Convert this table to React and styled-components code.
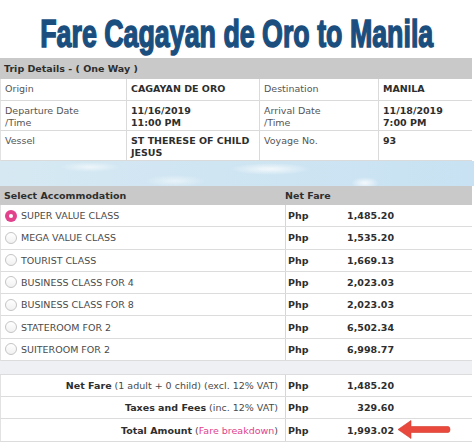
import React from 'react';
import styled, { createGlobalStyle } from 'styled-components';

const GlobalStyle = createGlobalStyle`
  html, body {
    margin: 0;
    padding: 0;
    background: #ffffff;
  }
  body {
    width: 474px;
    height: 442px;
    overflow: hidden;
    font-family: "DejaVu Sans", Verdana, sans-serif;
    font-size: 9.5px;
    color: #444;
  }
`;

const Page = styled.div`
  position: relative;
  width: 474px;
  height: 442px;
  display: flex;
  flex-direction: column;
`;

const TitleBar = styled.div`
  height: 58px;
  display: flex;
  justify-content: center;
  align-items: flex-start;
`;

const Title = styled.h1`
  margin: 0;
  margin-top: 15px;
  font-family: "Liberation Sans", Arial, sans-serif;
  font-weight: 700;
  font-size: 38px;
  line-height: 38px;
  color: #1a4e7e;
  -webkit-text-stroke: 1.5px #1a4e7e;
  transform: scaleX(0.705);
  transform-origin: center top;
  white-space: nowrap;
  flex: none;
`;

const Table = styled.div`
  width: 472px;
  display: flex;
  flex-direction: column;
`;

const HeaderBar = styled.div`
  height: ${p => p.$h}px;
  background: #c9c9c9;
  display: grid;
  grid-template-columns: ${p => p.$cols};
  align-items: center;
  font-weight: 700;
  color: #2e2e2e;
  padding-left: 4px;
  box-sizing: border-box;
`;

const TripRow = styled.div`
  display: grid;
  grid-template-columns: 126px 133px 119px 94px;
  height: ${p => p.$h}px;
  border-bottom: 1px solid #dadada;
  border-left: 1px solid #e2e2e2;
  box-sizing: border-box;
`;

const Cell = styled.div`
  padding: 4px 0 0 4px;
  line-height: 12px;
  border-right: 1px solid #dadada;
  color: ${p => (p.$bold ? '#2e2e2e' : '#555')};
  font-weight: ${p => (p.$bold ? 700 : 400)};
  white-space: nowrap;
  &:last-child {
    border-right: none;
  }
`;

const Sky = styled.div`
  height: 25px;
  width: 474px;
  background:
    radial-gradient(ellipse 40px 6px at 270px 8px, rgba(255,255,255,0.75), rgba(255,255,255,0) 100%),
    radial-gradient(ellipse 30px 5px at 90px 6px, rgba(255,255,255,0.6), rgba(255,255,255,0) 100%),
    radial-gradient(ellipse 14px 6px at 365px 22px, rgba(255,255,255,0.8), rgba(255,255,255,0) 100%),
    radial-gradient(ellipse 30px 6px at 175px 20px, rgba(255,255,255,0.5), rgba(255,255,255,0) 100%),
    linear-gradient(90deg, #d6e9f3 0%, #cfe5f2 45%, #c8e2f3 100%);
`;

const AccRow = styled.div`
  display: grid;
  grid-template-columns: 285px 1fr;
  height: ${p => p.$h}px;
  border-bottom: 1px solid #dcdcdc;
  border-left: 1px solid #e2e2e2;
  box-sizing: border-box;
`;

const NameCell = styled.div`
  display: flex;
  align-items: center;
  gap: 4px;
  padding-left: 4px;
  border-right: 1px solid #d6d6d6;
  color: #4a4a4a;
  justify-content: ${p => (p.$right ? 'flex-end' : 'flex-start')};
  padding-right: ${p => (p.$right ? '7px' : '0')};
  white-space: nowrap;
`;

const PriceCell = styled.div`
  display: grid;
  grid-template-columns: 40px 66px;
  align-items: center;
  padding-left: 2px;
  font-weight: 700;
  color: #2e2e2e;
`;

const Amount = styled.span`
  text-align: right;
`;

const Radio = styled.span`
  width: 12px;
  height: 12px;
  border-radius: 50%;
  box-sizing: border-box;
  flex: none;
  background: ${p => (p.$on ? '#e2418c' : 'linear-gradient(#ffffff, #f1f1f1)')};
  border: ${p => (p.$on ? 'none' : '1px solid #c4c4c4')};
  display: flex;
  align-items: center;
  justify-content: center;
  &::after {
    content: '';
    width: 4px;
    height: 4px;
    border-radius: 50%;
    background: #ffffff;
    display: ${p => (p.$on ? 'block' : 'none')};
  }
`;

const Gap = styled.div`
  height: 14px;
  width: 472px;
  background: #eef0f3;
  border-bottom: 1px solid #dcdcdc;
  box-sizing: border-box;
`;

const Strong = styled.b`
  color: #2e2e2e;
  font-weight: 700;
`;

const Link = styled.span`
  color: #e2418c;
`;

const Arrow = styled.svg`
  position: absolute;
  left: 396px;
  top: 418px;
`;

const accommodations = [
  { name: 'SUPER VALUE CLASS', fare: '1,485.20', on: true },
  { name: 'MEGA VALUE CLASS', fare: '1,535.20' },
  { name: 'TOURIST CLASS', fare: '1,669.13' },
  { name: 'BUSINESS CLASS FOR 4', fare: '2,023.03' },
  { name: 'BUSINESS CLASS FOR 8', fare: '2,023.03' },
  { name: 'STATEROOM FOR 2', fare: '6,502.34' },
  { name: 'SUITEROOM FOR 2', fare: '6,998.77' },
];

export default function App() {
  return (
    <Page>
      <GlobalStyle />
      <TitleBar>
        <Title>Fare Cagayan de Oro to Manila</Title>
      </TitleBar>

      <Table>
        <HeaderBar $h={21} $cols="1fr">Trip Details - ( One Way )</HeaderBar>
        <TripRow $h={22}>
          <Cell>Origin</Cell>
          <Cell $bold>CAGAYAN DE ORO</Cell>
          <Cell>Destination</Cell>
          <Cell $bold>MANILA</Cell>
        </TripRow>
        <TripRow $h={30}>
          <Cell>Departure Date<br />/Time</Cell>
          <Cell $bold>11/16/2019<br />11:00 PM</Cell>
          <Cell>Arrival Date<br />/Time</Cell>
          <Cell $bold>11/18/2019<br />7:00 PM</Cell>
        </TripRow>
        <TripRow $h={30}>
          <Cell>Vessel</Cell>
          <Cell $bold>ST THERESE OF CHILD<br />JESUS</Cell>
          <Cell>Voyage No.</Cell>
          <Cell $bold>93</Cell>
        </TripRow>
      </Table>

      <Sky />

      <Table>
        <HeaderBar $h={19} $cols="281px 1fr">
          <span>Select Accommodation</span>
          <span>Net Fare</span>
        </HeaderBar>
        {accommodations.map(a => (
          <AccRow key={a.name} $h={22.3}>
            <NameCell>
              <Radio $on={a.on} />
              {a.name}
            </NameCell>
            <PriceCell>
              <span>Php</span>
              <Amount>{a.fare}</Amount>
            </PriceCell>
          </AccRow>
        ))}
        <Gap />
        <AccRow $h={22}>
          <NameCell $right>
            <span><Strong>Net Fare</Strong> (1 adult + 0 child) (excl. 12% VAT)</span>
          </NameCell>
          <PriceCell>
            <span>Php</span>
            <Amount>1,485.20</Amount>
          </PriceCell>
        </AccRow>
        <AccRow $h={22}>
          <NameCell $right>
            <span><Strong>Taxes and Fees</Strong> (inc. 12% VAT)</span>
          </NameCell>
          <PriceCell>
            <span>Php</span>
            <Amount>329.60</Amount>
          </PriceCell>
        </AccRow>
        <AccRow $h={23}>
          <NameCell $right>
            <span><Strong>Total Amount</Strong> (<Link>Fare breakdown</Link>)</span>
          </NameCell>
          <PriceCell>
            <span>Php</span>
            <Amount>1,993.02</Amount>
          </PriceCell>
        </AccRow>
      </Table>

      <Arrow width="56" height="24" viewBox="0 0 56 24">
        <path
          d="M2 11.5 L15 2.5 L15 8.5 L52 8.5 Q54 8.5 54 11.5 Q54 14.5 52 14.5 L15 14.5 L15 20.5 Z"
          fill="#e8493c"
          stroke="#d63a2e"
          strokeWidth="0.6"
          strokeLinejoin="round"
        />
      </Arrow>
    </Page>
  );
}
